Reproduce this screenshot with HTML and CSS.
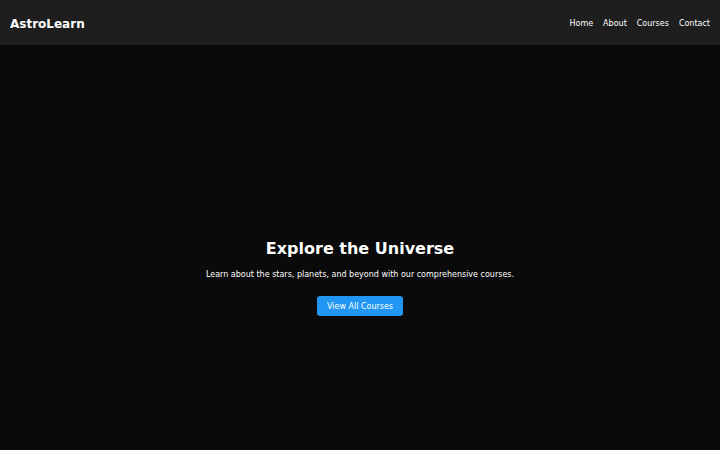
FILE: index.html
```html
<!DOCTYPE html>
<html>
<head>
<meta charset="utf-8">
<link rel="stylesheet" href="styles.css">
</head>
<body>
<header class="site-header">
  <div class="logo">AstroLearn</div>
  <nav class="nav">
    <a href="#">Home</a>
    <a href="#">About</a>
    <a href="#">Courses</a>
    <a href="#">Contact</a>
  </nav>
</header>
<main class="hero">
  <h1 class="hero-title">Explore the Universe</h1>
  <p class="hero-text">Learn about the stars, planets, and beyond with our comprehensive courses.</p>
  <a class="btn" href="#">View All Courses</a>
</main>
</body>
</html>
```
FILE: styles.css
```css
html, body {
  margin: 0;
  padding: 0;
  background: #0a0a0a;
  color: #ffffff;
  font-family: "DejaVu Sans", sans-serif;
}
* {
  box-sizing: border-box;
}
.site-header {
  height: 45px;
  background: #1e1e1e;
  display: flex;
  align-items: center;
  justify-content: space-between;
  padding: 2px 10px 0;
}
.logo {
  font-weight: bold;
  font-size: 12px;
}
.nav {
  display: flex;
  gap: 10px;
}
.nav a {
  color: #ffffff;
  text-decoration: none;
  font-size: 8px;
}
.hero {
  min-height: calc(100vh - 45px);
  padding-top: 60px;
  display: flex;
  flex-direction: column;
  align-items: center;
  justify-content: center;
  text-align: center;
}
.hero-title {
  font-size: 16px;
  margin: 0 0 12px;
}
.hero-text {
  font-size: 8px;
  margin: 0 0 17px;
}
.btn {
  background: #2196f3;
  color: #ffffff;
  text-decoration: none;
  font-size: 8px;
  padding: 5.5px 10px;
  border-radius: 3px;
}
```
